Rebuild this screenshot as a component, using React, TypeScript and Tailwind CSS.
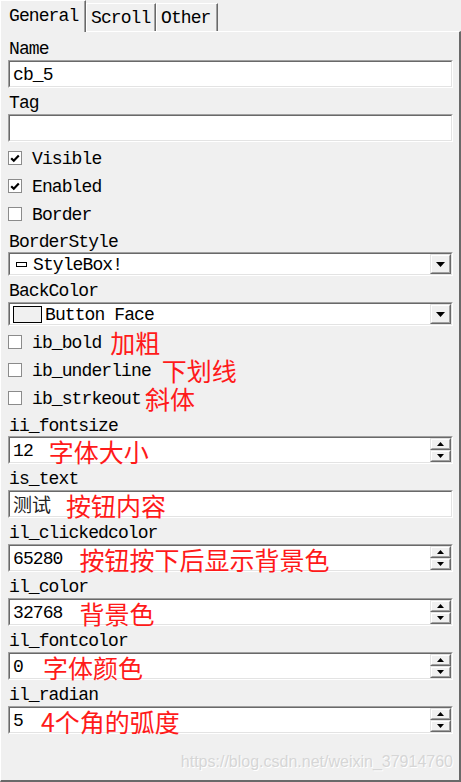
import type { ReactElement, ReactNode } from "react";

const mono = "font-['Liberation_Mono',monospace] text-[18px] tracking-[-0.9px] text-black";
const red = "font-['Noto_Sans_CJK_SC',sans-serif] text-[25px] leading-none text-[#ff1a1a] tracking-normal";

function Note({ children, className }: { children: ReactNode; className: string }): ReactElement {
  return <span className={`${red} ${className}`}>{children}</span>;
}

function Label({ text, h = "h-[26px]" }: { text: string; h?: string }): ReactElement {
  return <div className={`${h} flex items-center pl-[1px] pt-[4px]`}>{text}</div>;
}

function Sunken({ h, children }: { h: string; children: ReactNode }): ReactElement {
  return (
    <div className={`${h} border border-t-[#a0a0a0] border-l-[#a0a0a0] border-r-white border-b-white`}>
      <div className="flex h-full items-center border border-t-[#696969] border-l-[#696969] border-r-[#e3e3e3] border-b-[#e3e3e3] bg-white">
        {children}
      </div>
    </div>
  );
}

function Raised({ className, children }: { className: string; children: ReactNode }): ReactElement {
  return (
    <div className={`${className} border border-t-[#e3e3e3] border-l-[#e3e3e3] border-r-[#696969] border-b-[#696969]`}>
      <div className="flex h-full items-center justify-center border border-t-white border-l-white border-r-[#a0a0a0] border-b-[#a0a0a0] bg-[#f0f0f0]">
        {children}
      </div>
    </div>
  );
}

function Arrow({ up, w = 7, hgt = 4 }: { up?: boolean; w?: number; hgt?: number }): ReactElement {
  return (
    <svg width={w} height={hgt} viewBox={`0 0 ${w} ${hgt}`}>
      <polygon points={up ? `0,${hgt} ${w},${hgt} ${w / 2},0` : `0,0 ${w},0 ${w / 2},${hgt}`} fill="#000" />
    </svg>
  );
}

function SpinField({ value, children }: { value: ReactNode; children?: ReactNode }): ReactElement {
  return (
    <Sunken h="h-[28px]">
      <div className="flex h-full flex-1 items-center pl-[3px]">
        <span className="pt-[2px]">{value}</span>
        {children}
      </div>
      <div className="flex h-full w-[21px] flex-col">
        <Raised className="h-[12px] w-[21px]">
          <Arrow up />
        </Raised>
        <Raised className="h-[12px] w-[21px]">
          <Arrow />
        </Raised>
      </div>
    </Sunken>
  );
}

function Combo({ children }: { children: ReactNode }): ReactElement {
  return (
    <Sunken h="h-[24px]">
      <div className="flex h-full flex-1 items-center">{children}</div>
      <Raised className="h-full w-[21px]">
        <Arrow w={9} hgt={5} />
      </Raised>
    </Sunken>
  );
}

function Check({ label, checked, children }: { label: string; checked?: boolean; children?: ReactNode }): ReactElement {
  return (
    <div className="flex h-[28px] items-center">
      <div className="flex h-[14px] w-[14px] items-center justify-center border border-[#8b8b8b] bg-white">
        {checked && (
          <svg width="10" height="9" viewBox="0 0 10 9">
            <path d="M1.2 4.2 L3.8 6.8 L8.8 1.6" stroke="#000" strokeWidth="2.2" fill="none" />
          </svg>
        )}
      </div>
      <span className="ml-[10px] pt-[2px]">{label}</span>
      {children}
    </div>
  );
}

function Tab({ text, active, w }: { text: string; active?: boolean; w: string }): ReactElement {
  return (
    <div
      className={`${w} flex items-center border-t border-l border-white border-r border-r-[#696969] bg-[#f0f0f0] shadow-[inset_-1px_0_0_#a0a0a0] ${
        active ? "relative z-10 -mb-px h-[32px] pl-[8px] pb-[1px]" : "h-[28px] pl-[4px] pt-[1px]"
      }`}
    >
      {text}
    </div>
  );
}

export default function App(): ReactElement {
  return (
    <div className={`${mono} relative h-[782px] w-[461px] overflow-hidden bg-[#f0f0f0]`}>
      <div className="flex h-[31px] items-end">
        <Tab text="General" active w="w-[86px]" />
        <Tab text="Scroll" w="w-[70px]" />
        <Tab text="Other" w="w-[62px]" />
      </div>
      <div className="relative flex h-[751px] flex-col border-t border-l border-white border-r-2 border-b-2 border-r-[#696969] border-b-[#696969] pl-[7px] pr-[6px] pt-[2px]">
        <Label text="Name" />
        <Sunken h="h-[28px]">
          <span className="pl-[3px] pt-[2px]">cb_5</span>
        </Sunken>
        <Label text="Tag" />
        <Sunken h="h-[28px]">
          <span />
        </Sunken>
        <div className="mt-[2px]">
          <Check label="Visible" checked />
          <Check label="Enabled" checked />
          <Check label="Border" />
        </div>
        <Label text="BorderStyle" h="h-[24px]" />
        <Combo>
          <span className="ml-[6px] mr-[6px] h-[5px] w-[11px] border border-black bg-white" />
          <span className="pt-[2px]">StyleBox!</span>
        </Combo>
        <Label text="BackColor" />
        <Combo>
          <span className="ml-[3px] mr-[3px] h-[17px] w-[29px] border border-black bg-[#f0f0f0]" />
          <span className="pt-[2px]">Button Face</span>
        </Combo>
        <div className="mt-[2px]">
          <Check label="ib_bold">
            <Note className="ml-[9px]">加粗</Note>
          </Check>
          <Check label="ib_underline">
            <Note className="ml-[11px]">下划线</Note>
          </Check>
          <Check label="ib_strkeout">
            <Note className="ml-[4px]">斜体</Note>
          </Check>
        </div>
        <Label text="ii_fontsize" h="h-[24px]" />
        <SpinField value="12">
          <Note className="ml-[16px] mt-[3px]">字体大小</Note>
        </SpinField>
        <Label text="is_text" />
        <Sunken h="h-[28px]">
          <span className="pl-[3px] pt-[1px] font-['Noto_Sans_CJK_SC',sans-serif] text-[19px] tracking-normal text-[#222]">测试</span>
          <Note className="ml-[15px] mt-[3px]">按钮内容</Note>
        </Sunken>
        <Label text="il_clickedcolor" />
        <SpinField value="65280">
          <Note className="ml-[17px] mt-[3px]">按钮按下后显示背景色</Note>
        </SpinField>
        <Label text="il_color" />
        <SpinField value="32768">
          <Note className="ml-[17px] mt-[3px]">背景色</Note>
        </SpinField>
        <Label text="il_fontcolor" />
        <SpinField value="0">
          <Note className="ml-[20px] mt-[3px]">字体颜色</Note>
        </SpinField>
        <Label text="il_radian" />
        <SpinField value="5">
          <Note className="ml-[18px] mt-[3px]">4个角的弧度</Note>
        </SpinField>
        <div className="absolute bottom-[6px] right-[6px] font-['Liberation_Sans',sans-serif] text-[16px] tracking-normal text-[#d6d6d6] [text-shadow:1px_1px_0_#ffffff]">
          https://blog.csdn.net/weixin_37914760
        </div>
      </div>
    </div>
  );
}
